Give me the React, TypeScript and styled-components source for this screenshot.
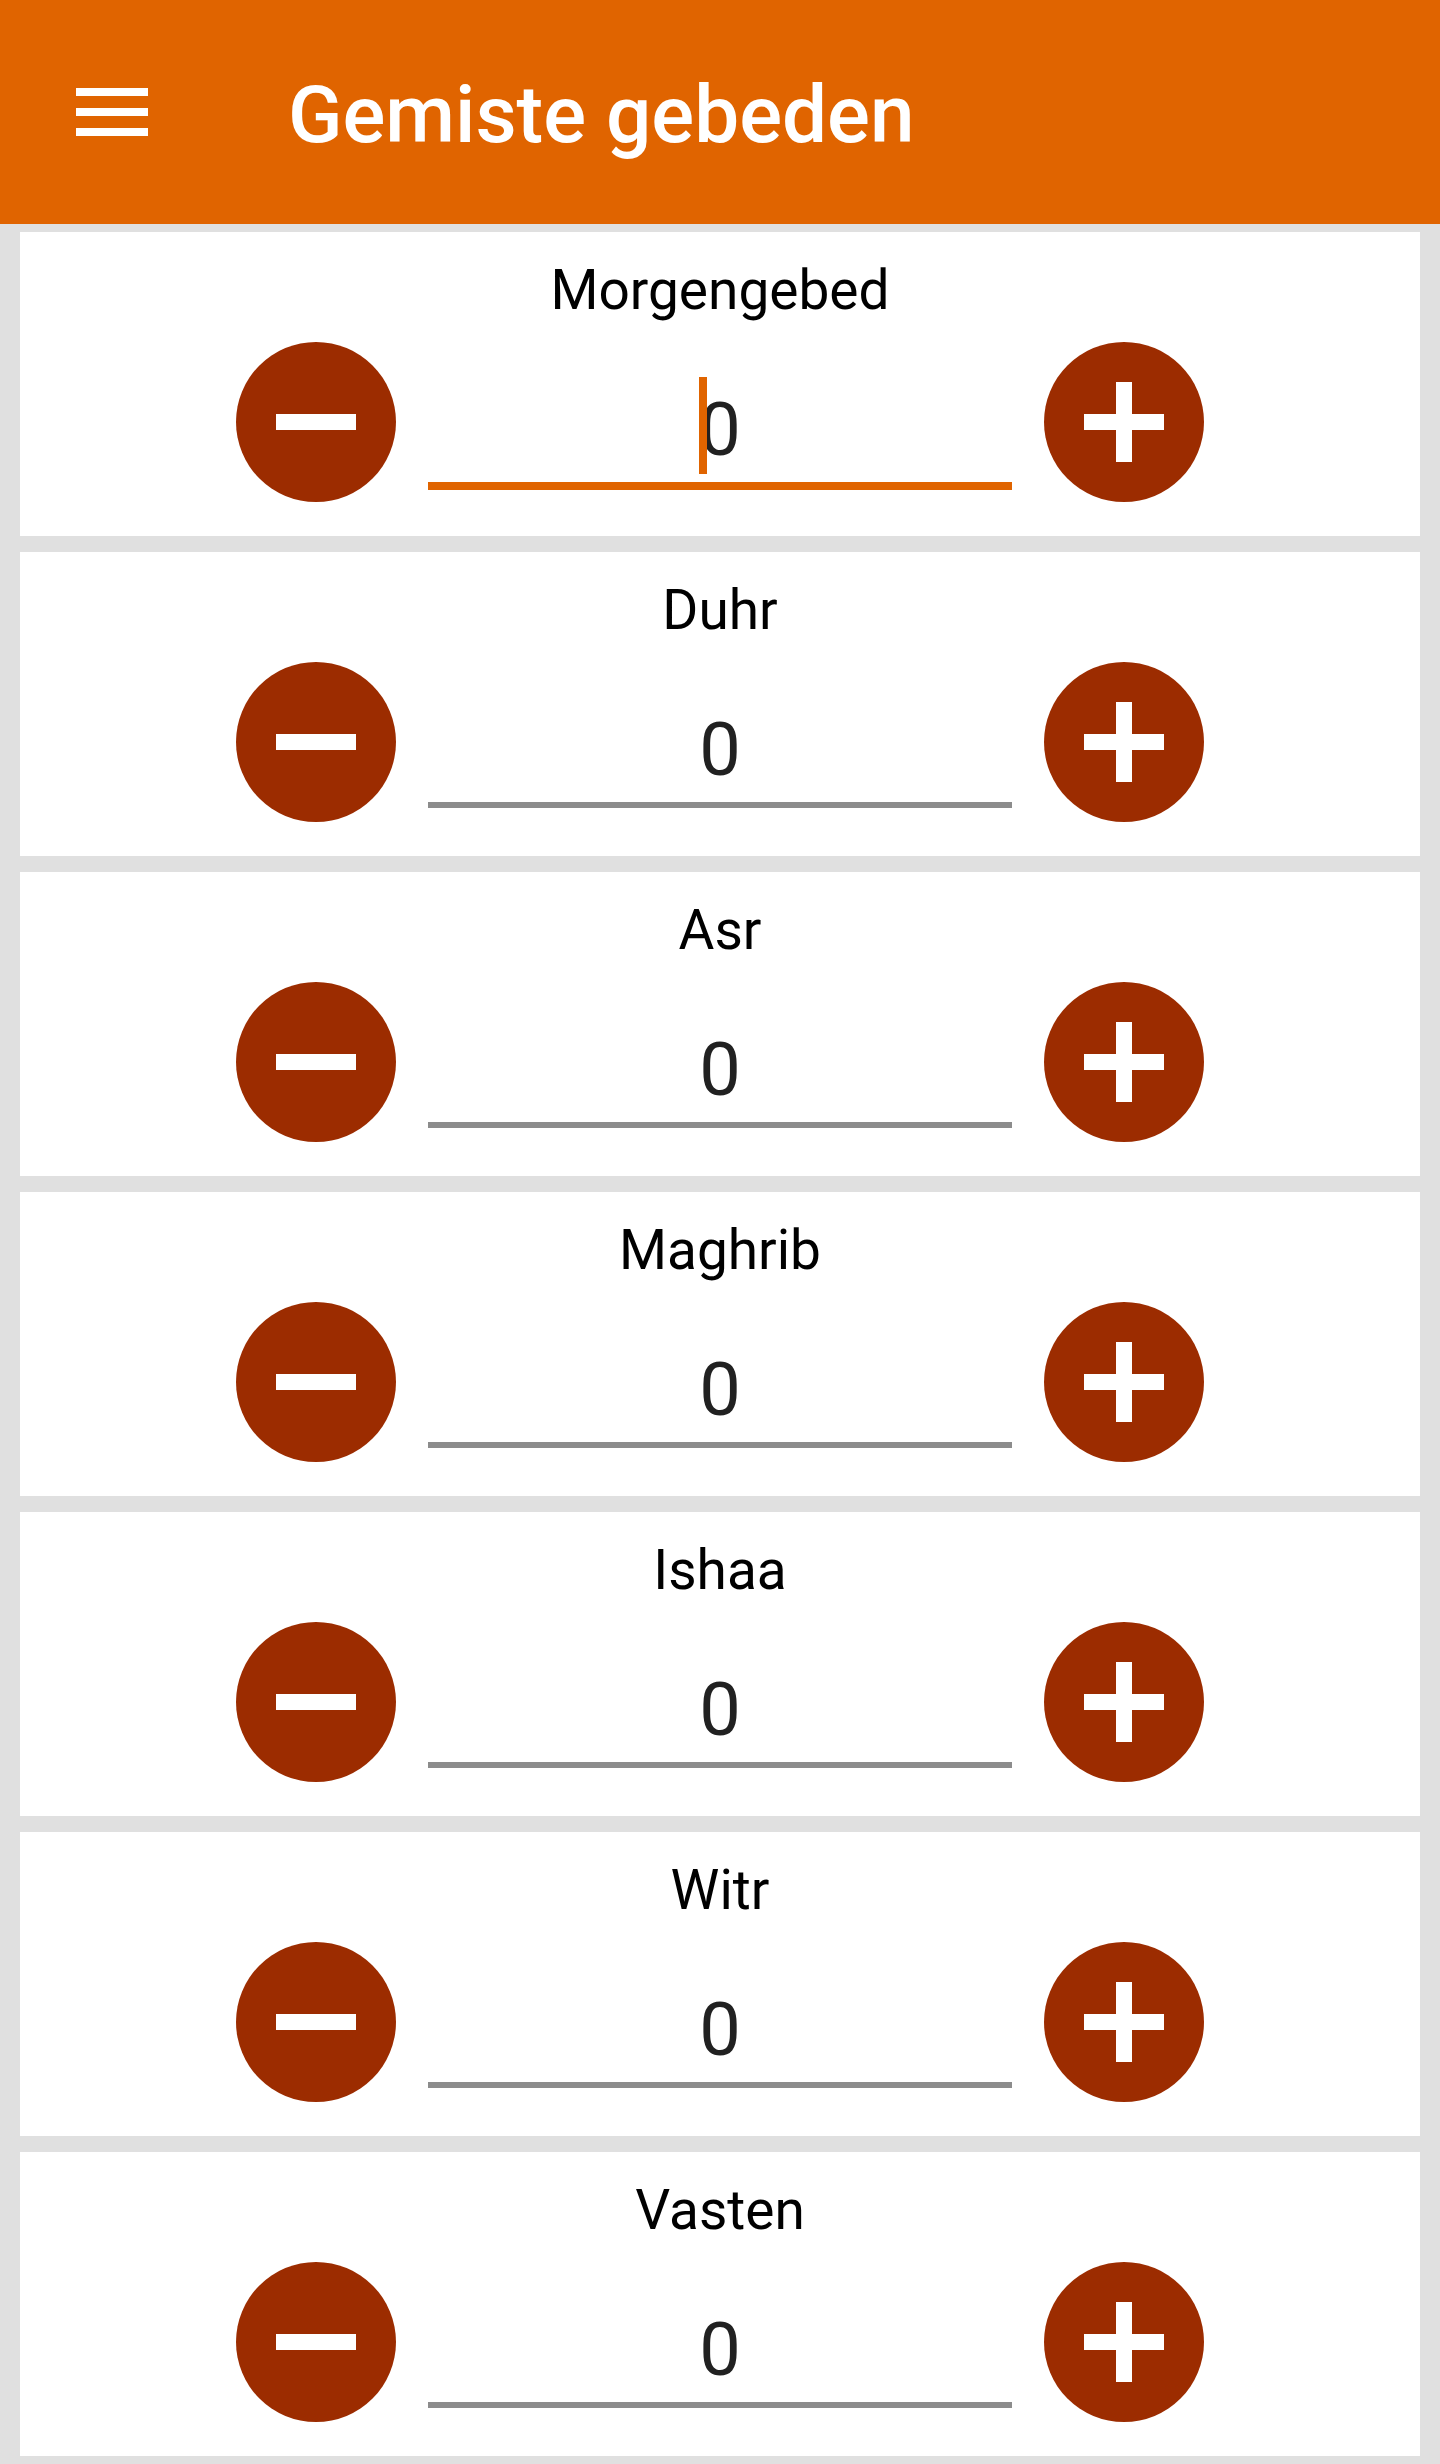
import React from 'react';
import styled, { createGlobalStyle } from 'styled-components';

const GlobalStyle = createGlobalStyle`
  body {
    margin: 0;
    background: #e0e0e0;
    font-family: Roboto, "Liberation Sans", sans-serif;
  }
`;

const Page = styled.div`
  width: 1440px;
  min-height: 2464px;
  background: #e0e0e0;
`;

const AppBar = styled.header`
  height: 224px;
  display: flex;
  align-items: center;
  padding-left: 64px;
  background: #e06400;
  box-sizing: border-box;
`;

const MenuIcon = styled.svg`
  width: 96px;
  height: 96px;
  flex-shrink: 0;
`;

const AppTitle = styled.h1`
  margin: 0 0 0 128px;
  padding-top: 6px;
  font-size: 80px;
  line-height: 1;
  font-weight: 500;
  color: #ffffff;
`;

const List = styled.main`
  display: flex;
  flex-direction: column;
  gap: 16px;
  padding: 8px 20px;
`;

const Card = styled.section`
  height: 304px;
  box-sizing: border-box;
  padding-top: 25px;
  background: #ffffff;
`;

const PrayerName = styled.div`
  height: 66px;
  margin-bottom: 19px;
  font-size: 55px;
  line-height: 66px;
  text-align: center;
  color: #000000;
`;

const CounterRow = styled.div`
  display: flex;
  justify-content: center;
  align-items: flex-start;
  gap: 32px;
  height: 160px;
`;

const RoundButton = styled.button<{ $plus?: boolean }>`
  position: relative;
  width: 160px;
  height: 160px;
  padding: 0;
  border: none;
  border-radius: 50%;
  background: #9c2c00;
  cursor: pointer;
  flex-shrink: 0;

  &::before {
    content: '';
    position: absolute;
    left: 40px;
    top: 72px;
    width: 80px;
    height: 16px;
    background: #ffffff;
  }

  &::after {
    content: '';
    display: ${({ $plus }) => ($plus ? 'block' : 'none')};
    position: absolute;
    left: 72px;
    top: 40px;
    width: 16px;
    height: 80px;
    background: #ffffff;
  }
`;

// underline always starts 140px below the row top, the focused one is thicker
const Field = styled.div<{ $focused?: boolean }>`
  width: 584px;
  height: ${({ $focused }) => ($focused ? '148px' : '146px')};
  display: flex;
  justify-content: center;
  align-items: flex-end;
  padding-bottom: 15px;
  box-sizing: border-box;
  border-bottom: ${({ $focused }) => ($focused ? '8px solid #e06400' : '6px solid #8c8c8c')};
`;

const Value = styled.span`
  position: relative;
  font-size: 74px;
  line-height: 74px;
  color: #212121;
`;

const Caret = styled.span`
  position: absolute;
  left: 0;
  top: -16px;
  bottom: -7px;
  width: 8px;
  background: #e06400;
`;

const prayers = ['Morgengebed', 'Duhr', 'Asr', 'Maghrib', 'Ishaa', 'Witr', 'Vasten'];

const App: React.FC = () => {
  return (
    <Page>
      <GlobalStyle />
      <AppBar>
        <MenuIcon viewBox="0 0 24 24">
          <path fill="#ffffff" d="M3 6h18v2H3zM3 11h18v2H3zM3 16h18v2H3z" />
        </MenuIcon>
        <AppTitle>Gemiste gebeden</AppTitle>
      </AppBar>
      <List>
        {prayers.map((name, i) => (
          <Card key={name}>
            <PrayerName>{name}</PrayerName>
            <CounterRow>
              <RoundButton aria-label="min" />
              <Field $focused={i === 0}>
                <Value>
                  {i === 0 && <Caret />}
                  0
                </Value>
              </Field>
              <RoundButton $plus aria-label="plus" />
            </CounterRow>
          </Card>
        ))}
      </List>
    </Page>
  );
};

export default App;
